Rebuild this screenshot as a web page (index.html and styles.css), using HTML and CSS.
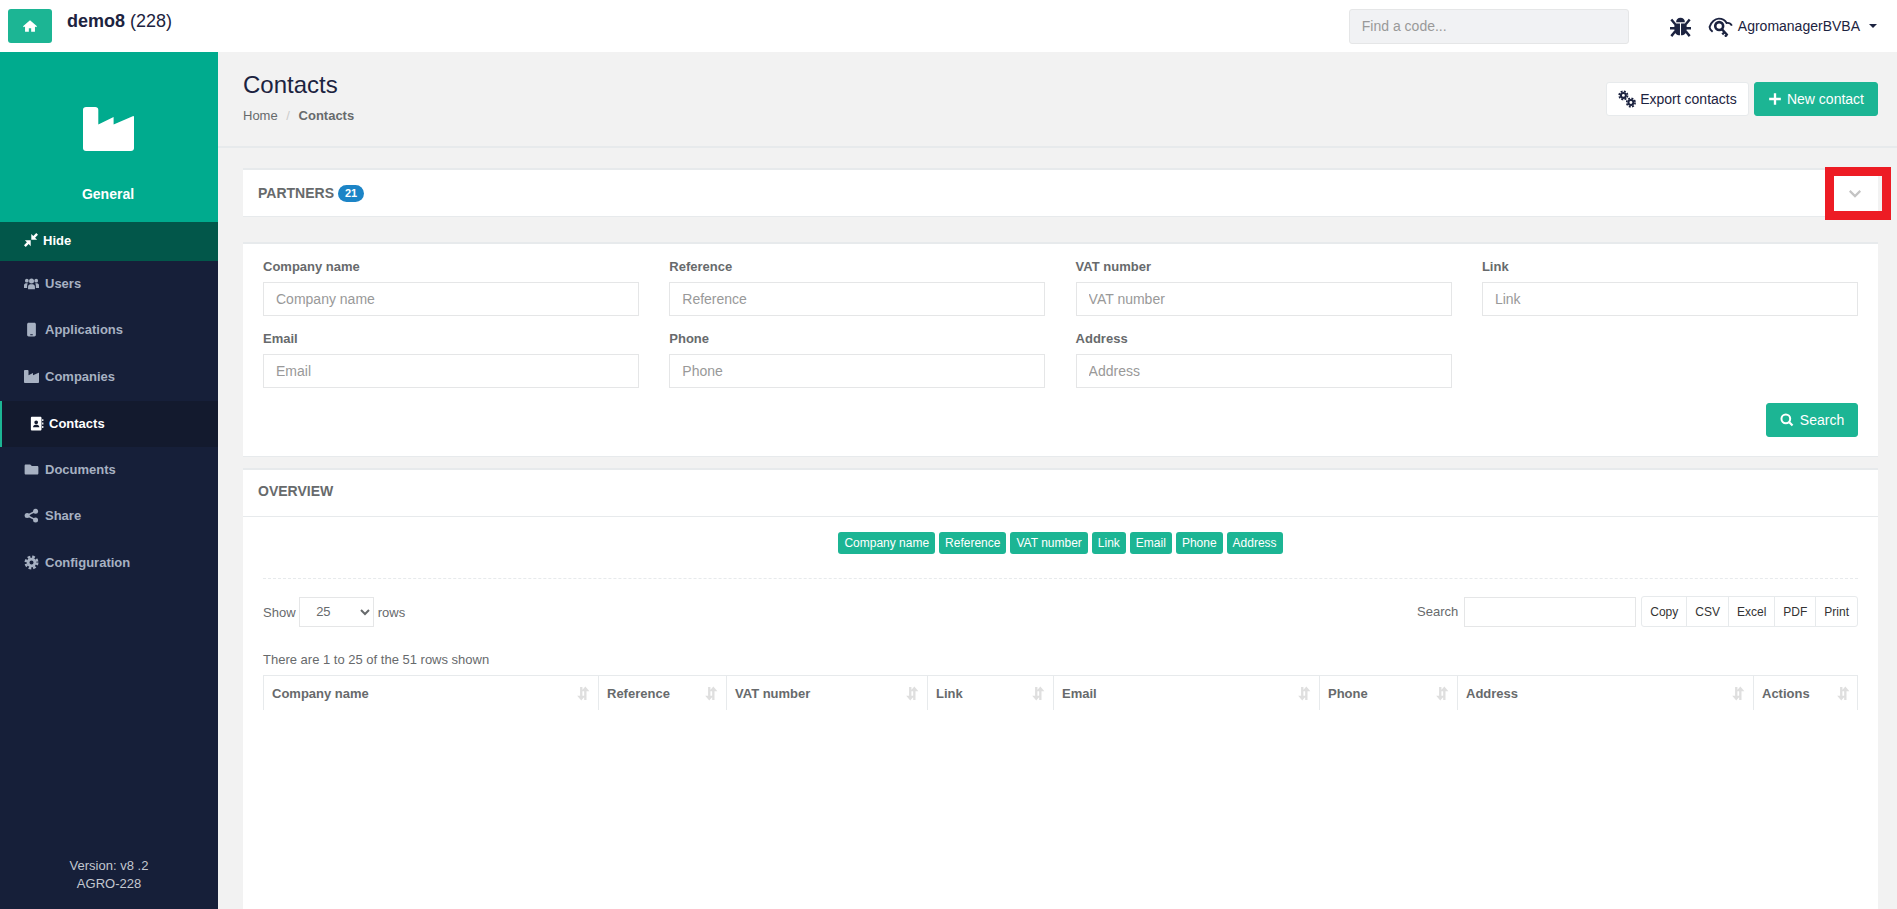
FILE: index.html
```html
<!DOCTYPE html>
<html lang="en">
<head>
  <meta charset="UTF-8">
  <title>Contacts</title>
  <link rel="stylesheet" href="styles.css">
</head>
<body>
  <svg class="defs" width="0" height="0">
    <symbol id="i-home" viewBox="0 0 24 24"><path d="M12 2 0 12.500l1.500 1.800L3.500 12.700V22h6.500v-6h4v6h6.500v-9.300l2 1.600 1.500-1.800z"/></symbol>
    <symbol id="i-industry" viewBox="2 2 20 20" preserveAspectRatio="none"><path d="M2 3.200C2 2.500 2.500 2 3.200 2h3.600C7.500 2 8 2.500 8 3.200V10l6-3.400V10l7.500-3.800c.3-.2.500 0 .5.300V20.800c0 .7-.5 1.200-1.200 1.200H3.200C2.500 22 2 21.500 2 20.800z"/></symbol>
    <symbol id="i-compress" viewBox="0 0 24 24"><path d="M12.500 1.500v10h10l-3.500-3.500L24 3l-3-3-5 5zM11.500 22.500v-10h-10L5 16l-5 5 3 3 5-5z"/></symbol>
    <symbol id="i-users" viewBox="0 0 24 24"><circle cx="12" cy="8" r="4"/><circle cx="4.500" cy="7.500" r="3"/><circle cx="19.500" cy="7.500" r="3"/><path d="M6.500 21v-4c0-2.500 2-4 3.500-4h4c1.500 0 3.500 1.500 3.500 4v4zM0 19v-4c0-2 1.500-3.500 3-3.500h3C5 13.500 5 15.500 5 19zM24 19v-4c0-2-1.500-3.500-3-3.500h-3c1 2 1 4 1 7.500z"/></symbol>
    <symbol id="i-mobile" viewBox="0 0 24 24"><path d="M7.500 1h9C18 1 19 2 19 3.500v17c0 1.500-1 2.500-2.500 2.500h-9C6 23 5 22 5 20.500v-17C5 2 6 1 7.500 1zM10 19.500v1.500h4v-1.500z" fill-rule="evenodd"/></symbol>
    <symbol id="i-folder" viewBox="0 0 24 24"><path d="M3 4h7l2.500 2.500H21c1.200 0 2 .8 2 2V18c0 1.200-.8 2-2 2H3c-1.200 0-2-.8-2-2V6c0-1.200.8-2 2-2z"/></symbol>
    <symbol id="i-share" viewBox="0 0 24 24"><circle cx="18.500" cy="5" r="4"/><circle cx="18.500" cy="19" r="4"/><circle cx="5" cy="12" r="4"/><path d="M5 12 18.500 5M5 12l13.500 7" stroke="currentColor" stroke-width="2.500" fill="none"/></symbol>
    <symbol id="i-cog" viewBox="0 0 24 24"><circle cx="12" cy="12" r="5.500" fill="none" stroke="currentColor" stroke-width="4.500"/><circle cx="12" cy="12" r="9.300" fill="none" stroke="currentColor" stroke-width="3.800" stroke-dasharray="4.300 3"/></symbol>
    <symbol id="i-book" viewBox="0 0 24 24"><path d="M5 1h13c1.200 0 2 .8 2 2v18c0 1.200-.8 2-2 2H5c-1.200 0-2-.8-2-2V3c0-1.200.8-2 2-2zm6.500 6a3 3 0 1 0 0 6 3 3 0 0 0 0-6zM6.500 18h10c0-2.500-1.800-4-3.500-4h-3c-1.700 0-3.500 1.500-3.500 4z" fill-rule="evenodd"/><path d="M21 5h2v3h-2zM21 10.500h2v3h-2zM21 16h2v3h-2z"/></symbol>
    <symbol id="i-bug" viewBox="0 0 24 24"><path d="M7 7c0-3 2-5 5-5s5 2 5 5z"/><path d="M5 8.500h6.400V22C7.500 22 5 19.500 5 15zM12.600 8.500H19V15c0 4.500-2.500 7-6.400 7z"/><path d="M1.500 4 6 9.500M22.500 4 18 9.500M0 14h6M24 14h-6M1.500 23l4.500-5.500M22.500 23l-4.500-5.500" stroke="currentColor" stroke-width="2.800" fill="none"/></symbol>
    <symbol id="i-keyeye" viewBox="0 0 28 24"><path d="M5 18C2.500 16 1.500 14 1.500 12.500 3 7 8 3 12 3c4.500 0 7.500 2 9 5 2.500-.5 4.500.5 6 3" fill="none" stroke="currentColor" stroke-width="2.200"/><circle cx="12.500" cy="11.500" r="4.500" fill="none" stroke="currentColor" stroke-width="3"/><path d="m15.500 15 6.500 7M18.500 18.500l-2.500 2.500M21.500 21.500l-2.500 2" stroke="currentColor" stroke-width="2.600" fill="none"/></symbol>
    <symbol id="i-cogs" viewBox="0 0 24 24"><g transform="scale(.6)"><use href="#i-cog"/></g><g transform="translate(10 9.500) scale(.6)"><use href="#i-cog"/></g></symbol>
    <symbol id="i-plus" viewBox="0 0 24 24"><path d="M10 2h4v8h8v4h-8v8h-4v-8H2v-4h8z"/></symbol>
    <symbol id="i-search" viewBox="0 0 24 24"><circle cx="10" cy="10" r="7.500" fill="none" stroke="currentColor" stroke-width="3.400"/><path d="m15.500 15.500 6 6" stroke="currentColor" stroke-width="3.800" fill="none"/></symbol>
    <symbol id="i-sort" viewBox="0 0 24 24"><path d="M7 1h4v15h5l-7 8-7-8h5zM18 23h-4V8H9l7-8 7 8h-5z"/></symbol>
  </svg>

  <header class="topbar">
    <a class="home-btn"><svg class="icon"><use href="#i-home"/></svg></a>
    <div class="tenant"><b>demo8</b> (228)</div>
    <input class="find-code" type="text" placeholder="Find a code...">
    <svg class="icon bug"><use href="#i-bug"/></svg>
    <svg class="icon keyeye"><use href="#i-keyeye"/></svg>
    <span class="account">AgromanagerBVBA</span>
    <span class="caret"></span>
  </header>

  <div class="layout">
    <aside class="sidebar">
      <div class="brand">
        <svg class="icon brand-icon"><use href="#i-industry"/></svg>
        <div class="brand-name">General</div>
      </div>
      <div class="hide-row"><svg class="icon"><use href="#i-compress"/></svg>Hide</div>
      <nav class="nav">
        <a class="nav-item"><svg class="icon"><use href="#i-users"/></svg>Users</a>
        <a class="nav-item"><svg class="icon"><use href="#i-mobile"/></svg>Applications</a>
        <a class="nav-item"><svg class="icon factory"><use href="#i-industry"/></svg>Companies</a>
        <a class="nav-item active"><svg class="icon"><use href="#i-book"/></svg>Contacts</a>
        <a class="nav-item"><svg class="icon"><use href="#i-folder"/></svg>Documents</a>
        <a class="nav-item"><svg class="icon"><use href="#i-share"/></svg>Share</a>
        <a class="nav-item"><svg class="icon"><use href="#i-cog"/></svg>Configuration</a>
      </nav>
      <div class="version">Version: v8 .2<br>AGRO-228</div>
    </aside>

    <main class="main">
      <div class="page-head">
        <div>
          <h1>Contacts</h1>
          <div class="crumbs">Home <span class="sep">/</span> <b>Contacts</b></div>
        </div>
        <div class="head-actions">
          <button class="btn btn-white"><svg class="icon"><use href="#i-cogs"/></svg>Export contacts</button>
          <button class="btn btn-teal"><svg class="icon"><use href="#i-plus"/></svg>New contact</button>
        </div>
      </div>

      <div class="content">
        <section class="panel partners">
          <h5>PARTNERS</h5><span class="count">21</span>
          <div class="collapse-mark"><svg class="chevron" viewBox="0 0 16 10"><path d="M2 2l6 6 6-6"/></svg></div>
        </section>

        <section class="panel filters">
          <div class="filter-grid">
            <label>Company name<input type="text" placeholder="Company name"></label>
            <label>Reference<input type="text" placeholder="Reference"></label>
            <label>VAT number<input type="text" placeholder="VAT number"></label>
            <label>Link<input type="text" placeholder="Link"></label>
            <label>Email<input type="text" placeholder="Email"></label>
            <label>Phone<input type="text" placeholder="Phone"></label>
            <label>Address<input type="text" placeholder="Address"></label>
          </div>
          <div class="filter-foot">
            <button class="btn btn-teal"><svg class="icon"><use href="#i-search"/></svg>Search</button>
          </div>
        </section>

        <section class="panel overview">
          <h5 class="overview-title">OVERVIEW</h5>
          <div class="overview-body">
            <div class="toggles">
              <span class="tag">Company name</span>
              <span class="tag">Reference</span>
              <span class="tag">VAT number</span>
              <span class="tag">Link</span>
              <span class="tag">Email</span>
              <span class="tag">Phone</span>
              <span class="tag">Address</span>
            </div>
            <div class="table-tools">
              <div class="show-rows">Show
                <select><option>25</option></select>
                rows</div>
              <div class="tools-right">
                <span>Search</span>
                <input type="text">
                <div class="btn-group">
                  <span>Copy</span><span>CSV</span><span>Excel</span><span>PDF</span><span>Print</span>
                </div>
              </div>
            </div>
            <div class="row-info">There are 1 to 25 of the 51 rows shown</div>
            <div class="thead">
              <div class="th">Company name<svg class="icon"><use href="#i-sort"/></svg></div>
              <div class="th">Reference<svg class="icon"><use href="#i-sort"/></svg></div>
              <div class="th">VAT number<svg class="icon"><use href="#i-sort"/></svg></div>
              <div class="th">Link<svg class="icon"><use href="#i-sort"/></svg></div>
              <div class="th">Email<svg class="icon"><use href="#i-sort"/></svg></div>
              <div class="th">Phone<svg class="icon"><use href="#i-sort"/></svg></div>
              <div class="th">Address<svg class="icon"><use href="#i-sort"/></svg></div>
              <div class="th">Actions<svg class="icon"><use href="#i-sort"/></svg></div>
            </div>
          </div>
        </section>
      </div>
    </main>
  </div>
</body>
</html>
```

FILE: styles.css
```css
* {
  box-sizing: border-box;
}
html, body {
  height: 100%;
}
body {
  margin: 0;
  display: flex;
  flex-direction: column;
  overflow: hidden;
  font-family: "Liberation Sans", Arial, sans-serif;
  font-size: 13px;
  color: #676a6c;
  background: #f2f2f2;
}
.defs {
  position: absolute;
}
.icon {
  width: 14px;
  height: 14px;
  fill: currentColor;
  flex: none;
}

/* top bar */
.topbar {
  height: 52px;
  flex: none;
  display: flex;
  align-items: center;
  background: #fff;
  padding: 0 20px 0 8px;
}
.home-btn {
  width: 44px;
  height: 34px;
  margin-bottom: 1px;
  display: flex;
  align-items: center;
  justify-content: center;
  background: #1cb594;
  border-radius: 3px;
  color: #fff;
}
.tenant {
  margin-left: 15px;
  margin-bottom: 10px;
  font-size: 18px;
  color: #1c2340;
}
.find-code {
  margin-left: auto;
  width: 280px;
  height: 35px;
  padding: 0 12px;
  background: #f1f2f4;
  border: 1px solid #e5e6e7;
  border-radius: 3px;
  font: 14px "Liberation Sans", Arial, sans-serif;
}
.find-code::placeholder {
  color: #999;
}
.bug {
  width: 21px;
  height: 21px;
  margin-left: 41px;
  color: #1c2340;
}
.keyeye {
  width: 25px;
  height: 21px;
  margin-left: 17px;
  color: #1c2340;
}
.account {
  margin-left: 5px;
  font-size: 14px;
  color: #1c2340;
}
.caret {
  margin-left: 9px;
  border: 4px solid transparent;
  border-top-color: #1c2340;
  border-bottom: 0;
}

.layout {
  flex: 1;
  display: flex;
  min-height: 0;
}

/* sidebar */
.sidebar {
  width: 218px;
  flex: none;
  display: flex;
  flex-direction: column;
  background: #161f39;
}
.brand {
  height: 170px;
  display: flex;
  flex-direction: column;
  align-items: center;
  padding-right: 2px;
  background: #00ab8e;
  color: #fff;
}
.brand-icon {
  width: 51px;
  height: 44px;
  margin-top: 55px;
}
.brand-name {
  margin-top: 35px;
  font-weight: bold;
  font-size: 14px;
}
.hide-row {
  height: 39px;
  display: flex;
  align-items: center;
  gap: 5px;
  padding: 0 0 3px 24px;
  background: #02574a;
  color: #fff;
  font-weight: bold;
  font-size: 13px;
}
.nav {
  display: flex;
  flex-direction: column;
}
.nav-item {
  height: 46.500px;
  display: flex;
  align-items: center;
  gap: 5px;
  padding: 0 0 2px 23px;
  color: #a7b1c2;
  font-weight: bold;
}
.nav-item .icon {
  width: 17px;
  height: 15px;
}
.nav-item .factory {
  width: 15px;
  height: 13px;
  margin: 0 1px;
}
.nav-item.active {
  padding: 0 0 0 26px;
  gap: 4px;
  background: #131a2e;
  border-left: 2px solid #1cb594;
  color: #fff;
}
.version {
  margin-top: auto;
  padding-bottom: 16px;
  text-align: center;
  font-size: 13px;
  line-height: 18px;
  color: #c3c7cf;
}

/* page */
.main {
  flex: 1;
  min-width: 0;
  min-height: 0;
  display: flex;
  flex-direction: column;
}
.page-head {
  height: 96px;
  flex: none;
  display: flex;
  justify-content: space-between;
  align-items: flex-start;
  padding: 19px 19px 0 25px;
  border-bottom: 2px solid #e7eaec;
}
h1 {
  margin: 0;
  font-weight: normal;
  font-size: 24px;
  line-height: 28px;
  color: #1c2340;
}
.crumbs {
  margin-top: 9px;
  line-height: 15px;
}
.crumbs .sep {
  margin: 0 5px;
  color: #ccc;
}
.head-actions {
  display: flex;
  align-items: center;
  gap: 5px;
  margin-top: 11px;
}
.btn {
  height: 34px;
  display: inline-flex;
  align-items: center;
  justify-content: center;
  gap: 5px;
  padding: 0 13px;
  border: 1px solid transparent;
  border-radius: 3px;
  white-space: nowrap;
  font: 14px "Liberation Sans", Arial, sans-serif;
}
.btn-white {
  width: 143px;
  padding: 0;
  gap: 4px;
  background: #fff;
  border-color: #e7eaec;
  color: #1c2340;
}
.btn-white .icon {
  width: 18px;
  height: 18px;
}
.btn-teal {
  background: #1cb594;
  border-color: #1cb594;
  color: #fff;
}
.content {
  flex: 1;
  min-height: 0;
  display: flex;
  flex-direction: column;
  padding: 20px 19px 0 25px;
}
.panel {
  background: #fff;
  border-top: 2px solid #e7eaec;
}
h5 {
  margin: 0;
  font-size: 14px;
  line-height: 15px;
}

.partners {
  position: relative;
  height: 49px;
  flex: none;
  display: flex;
  align-items: center;
  gap: 4px;
  padding: 0 15px;
  border-bottom: 1px solid #e7eaec;
}
.count {
  padding: 2px 7px;
  border-radius: 9px;
  background: #1c84c6;
  color: #fff;
  font-size: 11px;
  font-weight: bold;
  line-height: 13px;
}
/* the red mark lies over the panel edge */
.collapse-mark {
  position: absolute;
  top: -3px;
  right: -13px;
  width: 66px;
  height: 53px;
  display: flex;
  align-items: center;
  justify-content: center;
  border: 9px solid #ed1c24;
}
.chevron {
  width: 14px;
  height: 9px;
  fill: none;
  stroke: #c4c4c4;
  stroke-width: 2.500;
  margin-right: 6px;
}

.filters {
  margin-top: 25px;
  height: 215px;
  flex: none;
  padding: 15px 20px 0;
  border-bottom: 1px solid #e7eaec;
}
.filter-grid {
  display: grid;
  grid-template-columns: repeat(4, 376px);
  column-gap: 30.300px;
  row-gap: 15px;
}
.filter-grid label {
  display: block;
  font-weight: bold;
  line-height: 15px;
}
.filter-grid input {
  display: block;
  width: 100%;
  height: 34px;
  margin-top: 8px;
  padding: 0 12px;
  border: 1px solid #e5e6e7;
  font: 14px "Liberation Sans", Arial, sans-serif;
}
.filter-grid input::placeholder {
  color: #999;
}
.filter-foot {
  display: flex;
  justify-content: flex-end;
  margin-top: 15px;
}
.filter-foot .btn {
  width: 92px;
  padding: 0;
  gap: 6px;
}

.overview {
  margin-top: 11px;
  flex: 1;
  min-height: 0;
}
.overview-title {
  height: 47px;
  padding: 14px 15px 0;
  border-bottom: 1px solid #e7eaec;
}
.overview-body {
  padding: 15px 20px 0;
}
.toggles {
  display: flex;
  justify-content: center;
  gap: 4px;
  padding-bottom: 24px;
  border-bottom: 1px dashed #e7eaec;
}
.tag {
  padding: 0 6px;
  height: 22px;
  line-height: 22px;
  background: #1cb594;
  border-radius: 3px;
  color: #fff;
  font-size: 12px;
}
.table-tools {
  display: flex;
  justify-content: space-between;
  align-items: center;
  margin-top: 17px;
}
.show-rows select {
  width: 75px;
  height: 30px;
  margin: 0;
  padding: 0 12px;
  background: #fff;
  border: 1px solid #e5e6e7;
  color: #676a6c;
  font: 13px "Liberation Sans", Arial, sans-serif;
}
.tools-right {
  display: flex;
  align-items: center;
}
.tools-right input {
  width: 172px;
  height: 30px;
  margin: 0 5px 0 6px;
  border: 1px solid #e5e6e7;
}
.btn-group {
  display: flex;
  height: 31px;
  border: 1px solid #e7eaec;
  border-radius: 3px;
  color: #333;
  font-size: 12px;
}
.btn-group span {
  display: flex;
  align-items: center;
  padding: 0 8px;
}
.btn-group span + span {
  border-left: 1px solid #e7eaec;
}
.row-info {
  margin-top: 25px;
  line-height: 15px;
}
.thead {
  display: grid;
  grid-template-columns: 335px 128px 201px 126px 266px 138px 296px 105px;
  height: 35px;
  margin-top: 8px;
  border-top: 1px solid #e7eaec;
  border-right: 1px solid #e7eaec;
}
.th {
  display: flex;
  align-items: center;
  justify-content: space-between;
  padding: 0 8px;
  border-left: 1px solid #e7eaec;
  font-weight: bold;
}
.th .icon {
  width: 14px;
  height: 15px;
  color: #dfdfdf;
}
```
